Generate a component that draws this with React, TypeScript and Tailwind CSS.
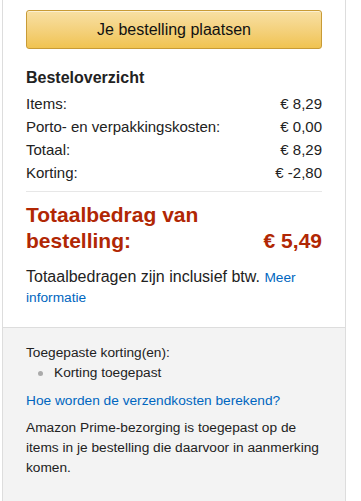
import React from "react";

const rows: [string, string][] = [
  ["Items:", "€ 8,29"],
  ["Porto- en verpakkingskosten:", "€ 0,00"],
  ["Totaal:", "€ 8,29"],
  ["Korting:", "€ -2,80"],
];

export default function App() {
  return (
    <div
      className="min-h-[501px] bg-white text-[#111]"
      style={{ fontFamily: '"Liberation Sans", Arial, sans-serif' }}
    >
      <div className="ml-[2px] w-[344px] min-h-[501px] border-x border-[#dddddd] flex flex-col">
        <div className="px-[23px] pt-[10px] pb-[20px] bg-white">
          <button className="block w-full h-[39px] rounded-[3px] border border-[#c89b36] bg-gradient-to-b from-[#f8e0a4] to-[#f0c350] text-[16px] text-[#111] leading-[20px] shadow-[inset_0_1px_0_rgba(255,255,255,0.5)]">
            Je bestelling plaatsen
          </button>
          <div className="mt-[19px] text-[16px] font-bold leading-[20px] text-[#222]">
            Besteloverzicht
          </div>
          <div className="mt-[4px]">
            {rows.map(([l, v]) => (
              <div key={l} className="flex justify-between text-[15px] leading-[23px] text-[#222]">
                <span>{l}</span>
                <span>{v}</span>
              </div>
            ))}
          </div>
          <div className="mt-[7px] border-t border-[#e7e7e7]" />
          <div className="mt-[10px] flex items-end justify-between text-[21px] font-bold leading-[26px] text-[#b12704]">
            <span className="w-[190px]">Totaalbedrag van bestelling:</span>
            <span>€ 5,49</span>
          </div>
          <p className="mt-[13px] text-[16px] leading-[20px] text-[#222]">
            Totaalbedragen zijn inclusief btw.{" "}
            <a className="text-[13.7px] leading-[16px] text-[#0066c0]">Meer informatie</a>
          </p>
        </div>
        <div className="flex-1 border-t border-[#dddddd] bg-[#f3f3f3] px-[23px] pt-[15px] text-[13.7px] leading-[20px] text-[#222]">
          <div>Toegepaste korting(en):</div>
          <div className="flex items-center">
            <span className="ml-[12px] mr-[11px] h-[5px] w-[5px] rounded-full bg-[#aaaaaa]" />
            <span>Korting toegepast</span>
          </div>
          <a className="mt-[8px] block text-[#0066c0]">Hoe worden de verzendkosten berekend?</a>
          <p className="mt-[7px]">
            Amazon Prime-bezorging is toegepast op de items in je bestelling die daarvoor in aanmerking komen.
          </p>
        </div>
      </div>
    </div>
  );
}
